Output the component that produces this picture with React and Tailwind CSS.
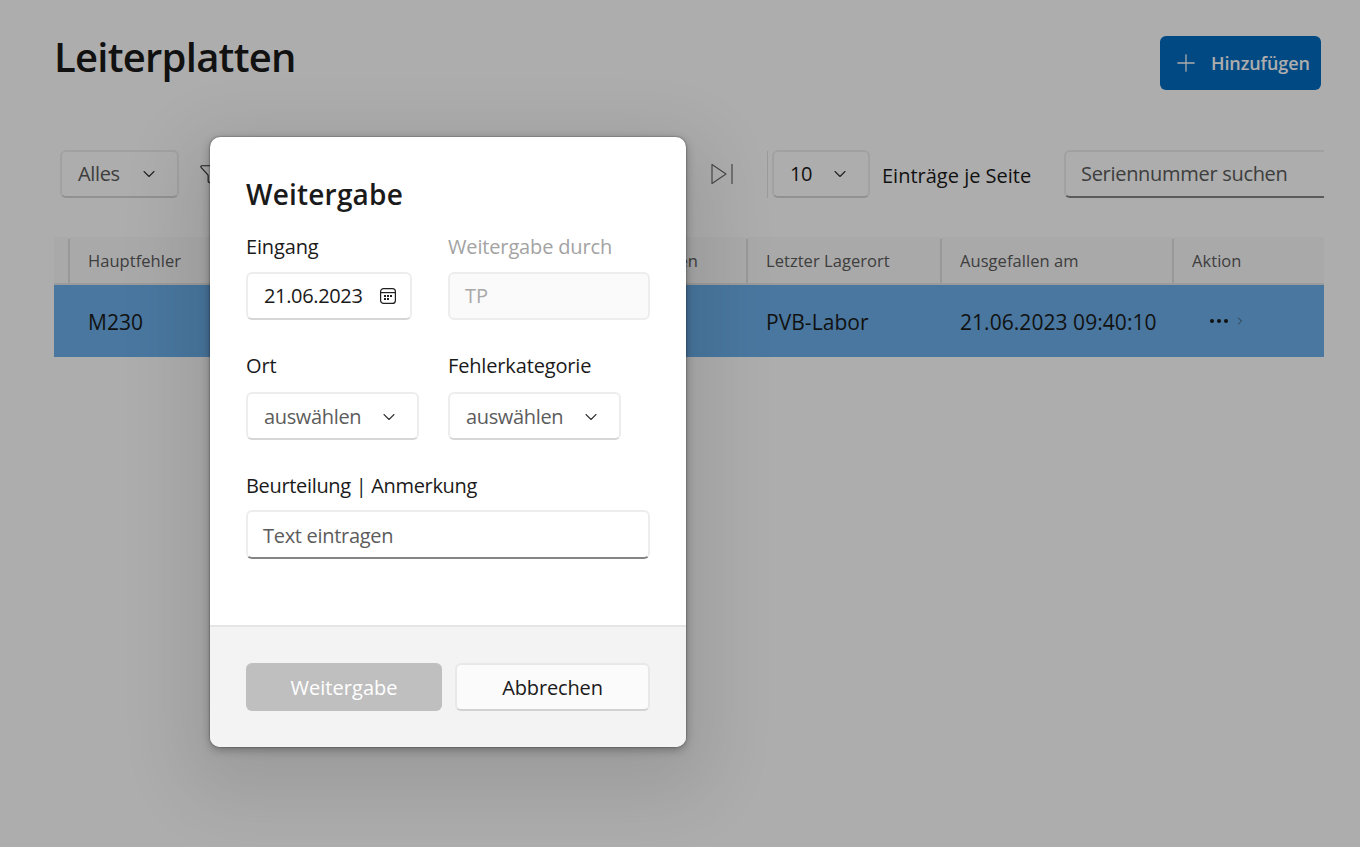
import { ChevronDown, ChevronRight, Funnel, Plus } from "lucide-react";

const font = { fontFamily: '"Open Sans", "Noto Sans", sans-serif' };

const CalendarIcon = () => (
  <svg width="18" height="18" viewBox="0 0 18 18" fill="none" stroke="#1f1f1f" strokeWidth="1.2">
    <rect x="1.6" y="1.6" width="14.8" height="14.8" rx="3" />
    <path d="M1.6 5.6h14.8" />
    <g fill="#1f1f1f" stroke="none">
      <rect x="5" y="8" width="2" height="2" />
      <rect x="8" y="8" width="2" height="2" />
      <rect x="11" y="8" width="2" height="2" />
      <rect x="5" y="11" width="2" height="2" />
      <rect x="8" y="11" width="2" height="2" />
    </g>
  </svg>
);

const LastPageIcon = () => (
  <svg width="22" height="22" viewBox="0 0 22 22" fill="none" stroke="#6b6b6b" strokeWidth="1.2">
    <path d="M1 1.5v19l14-9.5z" strokeLinejoin="round" />
    <path d="M21 1v20" />
  </svg>
);

const Select = ({ label, className = "", text = "text-[#5c5c5c]" }) => (
  <div className={`flex items-center justify-between h-[48px] pl-[16px] pr-[18px] bg-white rounded-[6px] border-2 border-[#ededed] border-b-[#d6d6d6] ${className}`}>
    <span className={`text-[20px] tracking-[-0.35px] ${text}`}>{label}</span>
    <ChevronDown size={20} strokeWidth={1.3} className="text-[#333333]" />
  </div>
);

const Field = ({ label, muted, children, className = "", labelClass = "mb-[11px] tracking-[-0.15px]" }) => (
  <div className={className}>
    <div className={`text-[20px] leading-[28px] ${labelClass} ${muted ? "text-[#a3a3a3]" : "text-[#1a1a1a]"}`}>{label}</div>
    {children}
  </div>
);

const Dialog = () => (
  <div className="flex flex-col w-[476px] h-[610px] ml-[210px] mt-[137px] bg-white rounded-[10px] overflow-hidden shadow-[0_24px_70px_22px_rgba(0,0,0,0.1),0_3px_10px_rgba(0,0,0,0.3),0_0_2px_rgba(0,0,0,0.55)]">
    <div className="flex-1 px-[36px] pt-[38px]">
      <h2 className="text-[28px] leading-[38px] font-semibold text-[#1a1a1a] tracking-[0.2px] mb-[20px]">Weitergabe</h2>
      <div className="flex">
        <Field label="Eingang" className="w-[202px]">
          <div className="flex items-center justify-between w-[166px] h-[48px] pl-[16px] pr-[13px] rounded-[6px] border-2 border-[#ededed] border-b-[#d6d6d6]">
            <span className="text-[20px] tracking-[-0.35px] text-[#1a1a1a]">21.06.2023</span>
            <CalendarIcon />
          </div>
        </Field>
        <Field label="Weitergabe durch" muted className="w-[202px]">
          <div className="flex items-center h-[48px] pl-[15px] rounded-[6px] border-2 border-[#ededed] bg-[#fafafa] text-[20px] text-[#a8a8a8]">TP</div>
        </Field>
      </div>
      <div className="flex mt-[32px]">
        <Field label="Ort" className="w-[202px]" labelClass="mb-[12px] tracking-[-0.15px]">
          <Select label="auswählen" className="w-[173px] pt-[1px]" />
        </Field>
        <Field label="Fehlerkategorie" className="w-[202px]" labelClass="mb-[12px] tracking-[-0.15px]">
          <Select label="auswählen" className="w-[173px] pt-[1px]" />
        </Field>
      </div>
      <Field label="Beurteilung | Anmerkung" className="mt-[32px]" labelClass="mb-[10px] tracking-[-0.33px]">
        <div className="flex items-center h-[49px] pt-[2px] pl-[15px] rounded-[6px] border-2 border-[#ededed] border-b-[#858585] text-[20px] tracking-[-0.3px] text-[#5c5c5c]">Text eintragen</div>
      </Field>
    </div>
    <div className="flex gap-[13px] h-[122px] px-[36px] pt-[36px] bg-[#f3f3f3] border-t-2 border-[#e5e5e5]">
      <button className="w-[196px] h-[48px] pt-[1px] rounded-[6px] bg-[#bfbfbf] text-white text-[20px] tracking-[0.05px]">Weitergabe</button>
      <button className="w-[195px] h-[48px] pt-[1px] rounded-[6px] bg-[#fbfbfb] border-2 border-[#e8e8e8] border-b-[#d2d2d2] text-[#1a1a1a] text-[20px] tracking-[-0.15px]">Abbrechen</button>
    </div>
  </div>
);

export default function App() {
  return (
    <div className="relative w-[1360px] h-[847px] overflow-hidden bg-white" style={font}>
      <div className="pl-[54px] pr-[36px] pt-[35px]">
        <div className="flex items-start justify-between pr-[3px]">
          <h1 className="text-[40px] leading-[43px] font-semibold tracking-[-0.75px] text-[#1a1a1a]">Leiterplatten</h1>
          <button className="flex items-center w-[161px] h-[54px] mt-[1px] pl-[12px] gap-[11px] rounded-[6px] bg-[#006cc2] text-white text-[18px] font-semibold tracking-[-0.1px]">
            <Plus size={28} strokeWidth={1.1} />
            Hinzufügen
          </button>
        </div>

        <div className="flex items-center justify-between mt-[60px] h-[48px] overflow-hidden">
          <div className="flex items-center">
            <Select label="Alles" className="w-[119px] ml-[6px]" />
            <Funnel size={22} strokeWidth={1.3} className="ml-[20px] text-[#333333]" />
          </div>
          <div className="flex items-center">
            <LastPageIcon />
            <div className="w-px h-[47px] ml-[34px] mr-[4px] bg-[#e3e3e3]" />
            <Select label="10" text="text-[#1a1a1a]" className="w-[98px]" />
            <span className="ml-[12px] w-[182px] pt-[4px] text-[20px] tracking-[0px] text-[#1a1a1a]">Einträge je Seite</span>
            <div className="flex items-center w-[260px] h-[48px] pl-[15px] rounded-l-[6px] border-2 border-r-0 border-[#ededed] border-b-[#858585] text-[20px] tracking-[-0.3px] text-[#5c5c5c]">Seriennummer suchen</div>
          </div>
        </div>

        <div className="mt-[39px]">
          <div className="flex h-[48px] pt-[2px] bg-[#f9f9f9] border-b-2 border-[#e5e5e5] text-[16.5px] tracking-[0.05px] text-[#5c5c5c]">
            <div className="w-[14px]" />
            <div className="flex items-center w-[540px] pl-[18px] border-l-2 border-[#e0e0e0]">Hauptfehler</div>
            <div className="flex items-center w-[138px] pl-[14px] border-l-2 border-[#e0e0e0]">Stationen</div>
            <div className="flex items-center w-[194px] pl-[18px] border-l-2 border-[#e0e0e0]">Letzter Lagerort</div>
            <div className="flex items-center w-[232px] pl-[18px] border-l-2 border-[#e0e0e0]">Ausgefallen am</div>
            <div className="flex items-center flex-1 pl-[18px] border-l-2 border-[#e0e0e0]">Aktion</div>
          </div>
          <div className="flex items-center h-[72px] pt-[3px] bg-[#6cb0ea] text-[21px] tracking-[0.05px] text-[#1a1a1a]">
            <div className="w-[712px] pl-[34px]">M230</div>
            <div className="w-[194px]">PVB-Labor</div>
            <div className="w-[232px]">21.06.2023 09:40:10</div>
            <div className="flex items-center pl-[18px] pb-[4px]">
              <span className="flex gap-[3px]">
                <span className="w-[4px] h-[4px] rounded-full bg-[#1a1a1a]" />
                <span className="w-[4px] h-[4px] rounded-full bg-[#1a1a1a]" />
                <span className="w-[4px] h-[4px] rounded-full bg-[#1a1a1a]" />
              </span>
              <ChevronRight size={12} strokeWidth={1.4} className="ml-[6px] text-[#333333]" />
            </div>
          </div>
        </div>
      </div>

      <div className="absolute inset-0 flex items-start bg-black/32">
        <Dialog />
      </div>
    </div>
  );
}
